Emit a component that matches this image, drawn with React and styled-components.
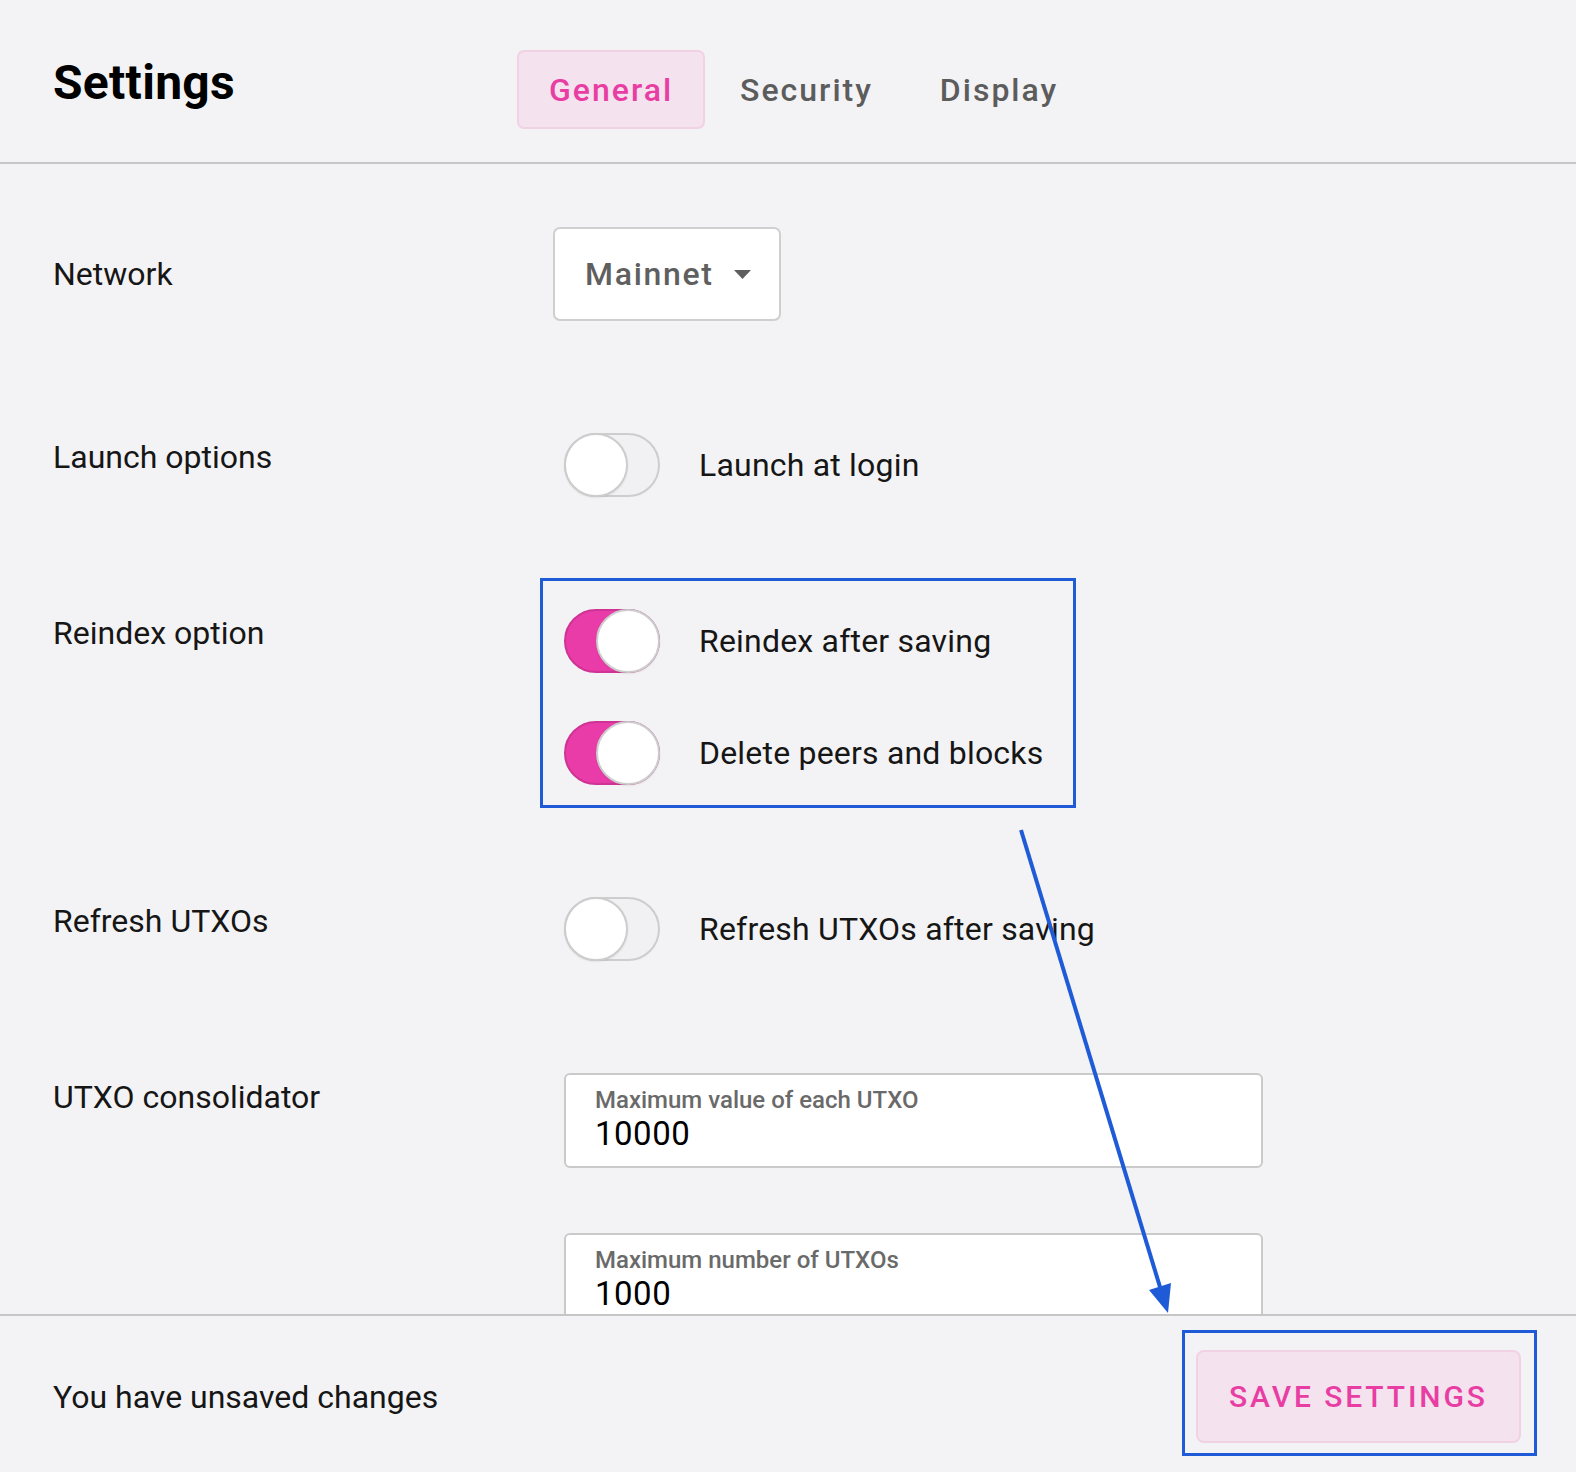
import React from 'react';
import styled, { createGlobalStyle } from 'styled-components';

const BLUE = '#1f5bd6';
const PINK = '#e83ea4';

const GlobalStyle = createGlobalStyle`
  * { box-sizing: border-box; }
  html, body { margin: 0; padding: 0; background: #f3f3f5; }
  body { font-family: Roboto, "Liberation Sans", sans-serif; color: #161616; }
`;

const Page = styled.div`
  position: relative;
  width: 1576px;
  height: 1472px;
  display: flex;
  flex-direction: column;
  background: #f3f3f5;
  overflow: hidden;
`;

const Header = styled.header`
  flex: none;
  height: 164px;
  display: flex;
  align-items: flex-start;
  padding: 0 53px;
  border-bottom: 2px solid #c6c6c6;
`;

const Title = styled.h1`
  margin: 55px 0 0;
  width: 464px;
  font-size: 48px;
  line-height: 56px;
  font-weight: 700;
  letter-spacing: 0.3px;
  color: #000;
`;

const Tabs = styled.nav`
  display: flex;
  gap: 3px;
  margin-top: 50px;
`;

const Tab = styled.div`
  height: 79px;
  padding: 0 30px;
  display: flex;
  align-items: center;
  font-size: 32px;
  font-weight: 500;
  letter-spacing: 2px;
  border-radius: 7px;
  color: ${p => (p.$active ? PINK : '#5c5c5c')};
  background: ${p => (p.$active ? '#f4e2ee' : 'transparent')};
  border: 2px solid ${p => (p.$active ? '#f0d2e4' : 'transparent')};
`;

const Main = styled.main`
  flex: 1;
  overflow: hidden;
  padding: 32px 0 0 53px;
  display: flex;
  flex-direction: column;
  gap: 58px;
`;

const Row = styled.section`
  display: grid;
  grid-template-columns: 487px 1fr;
  align-items: start;
`;

const Label = styled.div`
  padding-top: ${p => p.$top}px;
  font-size: 32px;
  line-height: 48px;
`;

const ControlBox = styled.div`
  justify-self: start;
  display: flex;
  flex-direction: column;
  gap: ${p => p.$gap || 48}px;
  padding: 28px 30px 20px 21px;
  border: 3px solid ${p => (p.$highlight ? BLUE : 'transparent')};
`;

const Dropdown = styled.div`
  margin-left: -11px;
  width: 228px;
  height: 94px;
  background: #fff;
  border: 2px solid #cfcfcf;
  border-radius: 7px;
  display: flex;
  align-items: center;
  padding-left: 30px;
  gap: 20px;
  font-size: 32px;
  font-weight: 500;
  letter-spacing: 1.7px;
  color: #5f5f5f;
`;

const ToggleRow = styled.label`
  display: flex;
  align-items: center;
  gap: 39px;
  font-size: 32px;
  line-height: 40px;
  letter-spacing: 0.2px;
`;

const Track = styled.span`
  position: relative;
  flex: none;
  width: 96px;
  height: 64px;
  border-radius: 32px;
  background: ${p => (p.$on ? '#e93ca8' : '#f1f1f3')};
  border: 2px solid ${p => (p.$on ? '#cf3393' : '#cdcdcd')};
`;

const Knob = styled.span`
  position: absolute;
  top: -2px;
  left: ${p => (p.$on ? '30px' : '-2px')};
  width: 64px;
  height: 64px;
  border-radius: 50%;
  background: #fff;
  border: 2px solid #cdcdcd;
  box-shadow: 0 1px 2px rgba(0, 0, 0, 0.08);
`;

const Field = styled.div`
  width: 699px;
  height: 95px;
  background: #fff;
  border: 2px solid #cacaca;
  border-radius: 6px;
  padding: 10px 29px 0;
  display: flex;
  flex-direction: column;
`;

const FieldLabel = styled.div`
  font-size: 24px;
  line-height: 30px;
  font-weight: 500;
  color: #6a6a6a;
`;

const FieldValue = styled.div`
  font-size: 33px;
  line-height: 38px;
  letter-spacing: 0.5px;
  color: #000;
`;

const Footer = styled.footer`
  flex: none;
  height: 158px;
  border-top: 2px solid #c6c6c6;
  display: flex;
  align-items: center;
  justify-content: space-between;
  padding: 0 39px 0 53px;
`;

const Unsaved = styled.div`
  font-size: 32px;
  line-height: 40px;
  margin-top: 6px;
`;

const Highlight = styled.div`
  margin-top: -3px;
  border: 3px solid ${BLUE};
  padding: 17px 13px 10px 11px;
`;

const SaveButton = styled.button`
  width: 325px;
  height: 93px;
  background: #f4e2ee;
  border: 2px solid #f0d2e4;
  border-radius: 8px;
  color: ${PINK};
  font-family: Roboto, "Liberation Sans", sans-serif;
  font-size: 30px;
  font-weight: 500;
  letter-spacing: 2.9px;
  cursor: pointer;
`;

const Overlay = styled.svg`
  position: absolute;
  left: 0;
  top: 0;
  pointer-events: none;
`;

function Toggle({ on, children }) {
  return (
    <ToggleRow>
      <Track $on={on}>
        <Knob $on={on} />
      </Track>
      {children}
    </ToggleRow>
  );
}

export default function App() {
  return (
    <Page>
      <GlobalStyle />
      <Header>
        <Title>Settings</Title>
        <Tabs>
          <Tab $active>General</Tab>
          <Tab>Security</Tab>
          <Tab>Display</Tab>
        </Tabs>
      </Header>
      <Main>
        <Row>
          <Label $top={54}>Network</Label>
          <ControlBox>
            <Dropdown>
              Mainnet
              <svg width="17" height="9" viewBox="0 0 17 9">
                <path d="M0 0 L17 0 L8.5 9 Z" fill="#5f5f5f" />
              </svg>
            </Dropdown>
          </ControlBox>
        </Row>
        <Row>
          <Label $top={31}>Launch options</Label>
          <ControlBox>
            <Toggle on={false}>Launch at login</Toggle>
          </ControlBox>
        </Row>
        <Row>
          <Label $top={31}>Reindex option</Label>
          <ControlBox $highlight>
            <Toggle on>Reindex after saving</Toggle>
            <Toggle on>Delete peers and blocks</Toggle>
          </ControlBox>
        </Row>
        <Row>
          <Label $top={31}>Refresh UTXOs</Label>
          <ControlBox>
            <Toggle on={false}>Refresh UTXOs after saving</Toggle>
          </ControlBox>
        </Row>
        <Row>
          <Label $top={31}>UTXO consolidator</Label>
          <ControlBox $gap={65}>
            <Field>
              <FieldLabel>Maximum value of each UTXO</FieldLabel>
              <FieldValue>10000</FieldValue>
            </Field>
            <Field>
              <FieldLabel>Maximum number of UTXOs</FieldLabel>
              <FieldValue>1000</FieldValue>
            </Field>
          </ControlBox>
        </Row>
      </Main>
      <Footer>
        <Unsaved>You have unsaved changes</Unsaved>
        <Highlight>
          <SaveButton>SAVE SETTINGS</SaveButton>
        </Highlight>
      </Footer>
      <Overlay width="1576" height="1472" viewBox="0 0 1576 1472">
        <line x1="1021" y1="830" x2="1160" y2="1287" stroke={BLUE} strokeWidth="4" />
        <polygon points="1168,1313 1171,1283 1149,1290" fill={BLUE} />
      </Overlay>
    </Page>
  );
}
